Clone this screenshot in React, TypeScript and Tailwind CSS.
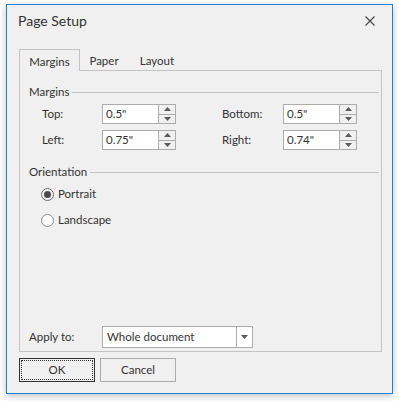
import React from "react";

const font = { fontFamily: "Lato, 'Noto Sans', sans-serif" };

function UpArrow() {
  return (
    <svg width="7" height="4" viewBox="0 0 7 4">
      <path d="M0 4 L3.5 0 L7 4 Z" fill="#5a5a5a" />
    </svg>
  );
}

function DownArrow() {
  return (
    <svg width="7" height="4" viewBox="0 0 7 4">
      <path d="M0 0 L7 0 L3.5 4 Z" fill="#5a5a5a" />
    </svg>
  );
}

function SpinBox({ value }: { value: string }) {
  return (
    <div className="flex h-[20px] w-[74px]">
      <div className="flex h-full w-[56px] items-center border border-r-0 border-[#acacac] bg-white pl-[3px] text-[11.5px] text-[#333]">
        {value}
      </div>
      <div className="flex h-full w-[18px] flex-col border border-[#acacac] bg-[#f0f0f0]">
        <div className="flex flex-1 items-center justify-center border-b border-[#acacac]">
          <UpArrow />
        </div>
        <div className="flex flex-1 items-center justify-center">
          <DownArrow />
        </div>
      </div>
    </div>
  );
}

function GroupHeader({ label }: { label: string }) {
  return (
    <div className="flex h-[16px] items-center pl-[9px] pr-[2px]">
      <span className="text-[11.5px] text-[#333]">{label}</span>
      <div className="ml-[3px] h-px flex-1 bg-[#c4c4c4]" />
    </div>
  );
}

function Radio({ label, checked }: { label: string; checked?: boolean }) {
  return (
    <div className="flex h-[16px] items-center pl-[21px]">
      <div
        className={`flex h-[13px] w-[13px] items-center justify-center rounded-full border ${
          checked ? "border-[#6d6d6d] bg-[#f4f4f4]" : "border-[#8a8a8a] bg-white"
        }`}
      >
        {checked && <div className="h-[7px] w-[7px] rounded-full bg-[#4a4a4a]" />}
      </div>
      <span className="ml-[4px] text-[11.5px] text-[#333]">{label}</span>
    </div>
  );
}

export default function App() {
  return (
    <div className="h-[402px] w-[399px] bg-white pl-[6px] pt-[4px]" style={font}>
      <div className="flex h-[390px] w-[387px] flex-col border border-[#1883d7] bg-[#f0f0f0] shadow-[0_2px_7px_rgba(0,0,0,0.25)]">
        {/* title bar */}
        <div className="flex h-[31px] items-center justify-between pl-[11px] pr-[17px]">
          <span className="text-[14px] text-[#333]">Page Setup</span>
          <svg width="10" height="10" viewBox="0 0 10 10">
            <path d="M0.5 0.5 L9.5 9.5 M9.5 0.5 L0.5 9.5" stroke="#444" strokeWidth="1.1" />
          </svg>
        </div>

        {/* tabs */}
        <div className="ml-[12px] mt-[13px] flex text-[11.5px] text-[#333]">
          <div className="relative z-10 -mb-px flex h-[22px] w-[61px] items-center justify-center border border-b-0 border-[#c4c4c4] bg-[#f0f0f0] pt-[2px]">
            Margins
          </div>
          <div className="flex h-[21px] w-[48px] items-center justify-center pt-[2px]">Paper</div>
          <div className="flex h-[21px] w-[58px] items-center justify-center pt-[2px]">Layout</div>
        </div>

        {/* panel */}
        <div className="ml-[12px] flex h-[282px] w-[363px] flex-col border border-[#c4c4c4]">
          <div className="mt-[13px]">
            <GroupHeader label="Margins" />
          </div>
          <div className="mt-[4px] flex items-center pl-[22px] text-[11.5px] text-[#333]">
            <span className="w-[60px]">Top:</span>
            <SpinBox value={'0.5"'} />
            <span className="ml-[46px] w-[61px]">Bottom:</span>
            <SpinBox value={'0.5"'} />
          </div>
          <div className="mt-[6px] flex items-center pl-[22px] text-[11.5px] text-[#333]">
            <span className="w-[60px]">Left:</span>
            <SpinBox value={'0.75"'} />
            <span className="ml-[46px] w-[61px]">Right:</span>
            <SpinBox value={'0.74"'} />
          </div>

          <div className="mt-[14px]">
            <GroupHeader label="Orientation" />
          </div>
          <div className="mt-[6px]">
            <Radio label="Portrait" checked />
          </div>
          <div className="mt-[10px]">
            <Radio label="Landscape" />
          </div>

          <div className="flex-1" />

          <div className="mb-[3px] flex items-center pl-[9px] text-[11.5px] text-[#333]">
            <span className="w-[73px]">Apply to:</span>
            <div className="flex h-[22px] w-[151px] border border-[#acacac] bg-white">
              <div className="flex flex-1 items-center pl-[4px]">Whole document</div>
              <div className="flex w-[16px] items-center justify-center border-l border-[#acacac]">
                <DownArrow />
              </div>
            </div>
          </div>
        </div>

        {/* buttons */}
        <div className="ml-[12px] mt-[6px] flex gap-[5px] text-[11.5px] text-[#333]">
          <div className="h-[24px] w-[76px] border border-[#333] p-[1px]">
            <div className="flex h-full w-full items-center justify-center border border-dotted border-[#333]">
              OK
            </div>
          </div>
          <div className="flex h-[24px] w-[76px] items-center justify-center border border-[#adadad]">
            Cancel
          </div>
        </div>
      </div>
    </div>
  );
}
